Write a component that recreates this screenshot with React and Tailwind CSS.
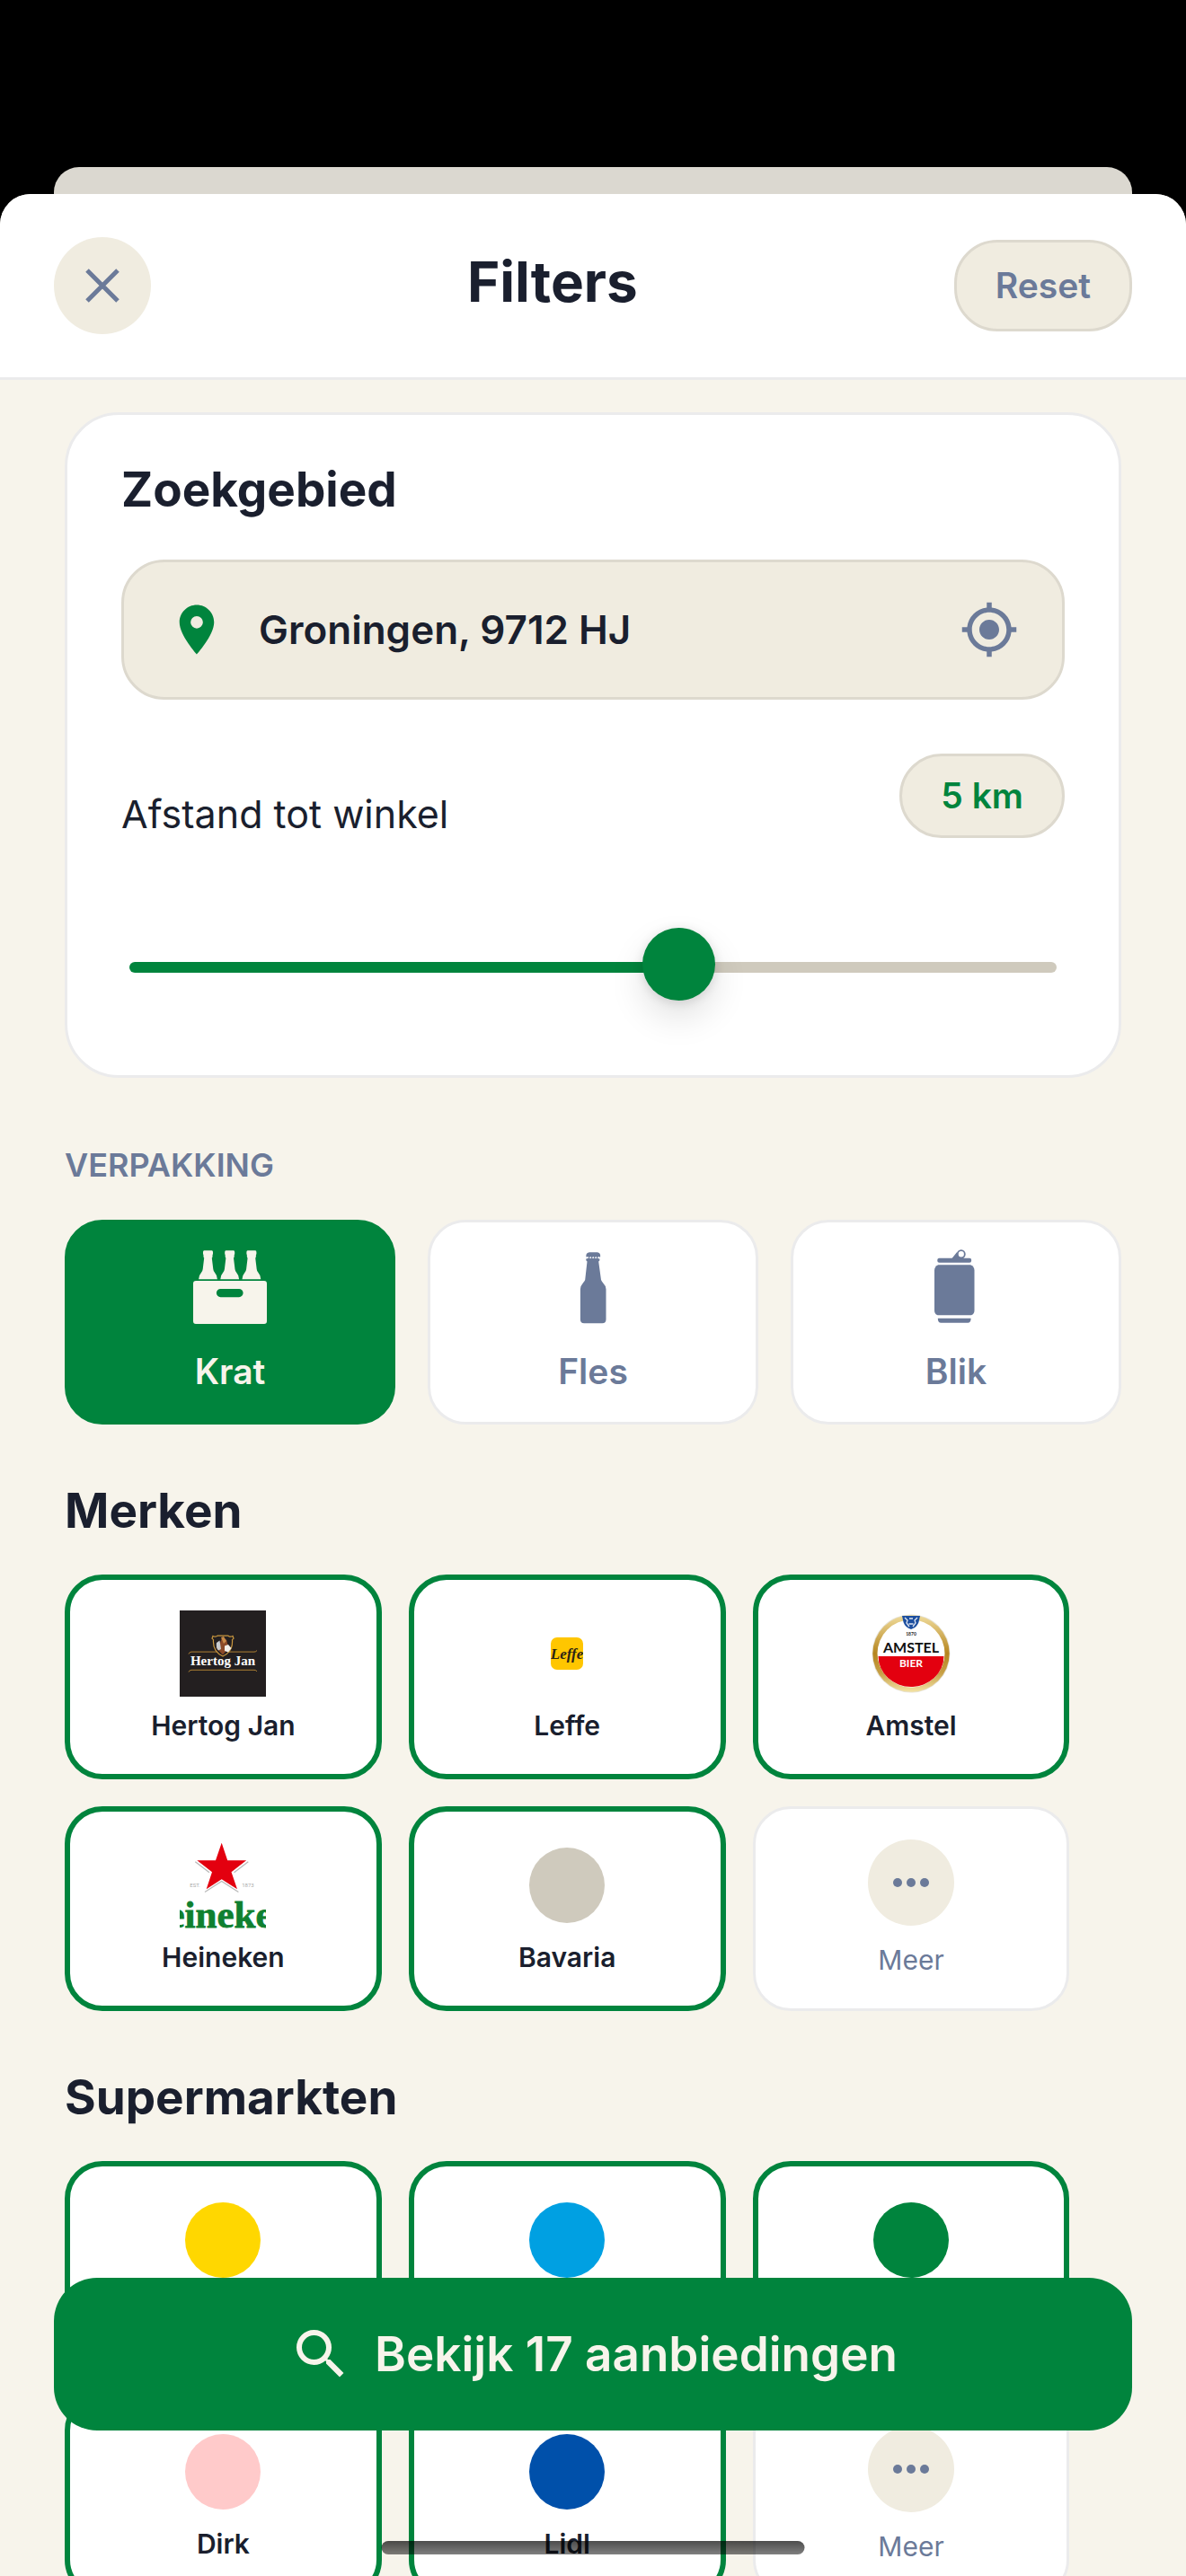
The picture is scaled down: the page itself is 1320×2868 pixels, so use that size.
import React, { useState } from 'react';
import clsx from 'clsx';
import { MdMyLocation, MdPlace, MdSearch } from 'react-icons/md';

const DISTANCES = [1, 2, 3, 5, 10, 25];

const CrateIcon = () => (
    <svg viewBox="0 0 84 84" className="size-[84px]" fill="currentColor" aria-hidden="true">
        {[17.5, 41.7, 65.9].map((x) => (
            <path
                key={x}
                transform={`translate(${x} 0)`}
                d="M-4.3 1.3h8.6q1.2.3 1.2 1.6v2.3l-.6 1 .4 1-.6.8.3 1-.7.6L5.8 22q.3 2 1.5 3.6 3.1 3.6 3.1 7.7h-20.8q0-4.1 3.1-7.7Q-6.1 24-5.8 22L-4.3 9.600l-.7-.6.3-1-.6-.8.4-1-.6-1V2.900q0-1.300 1.200-1.600z"
            />
        ))}
        <path
            fillRule="evenodd"
            d="M4 35h76q3 0 3 3v42q0 3-3 3H4q-3 0-3-3V38q0-3 3-3zM31.5 44a4.600 4.600 0 0 0 0 9.200h20.500a4.600 4.600 0 0 0 0-9.200z"
        />
    </svg>
);

const BottleIcon = () => (
    <svg viewBox="0 0 84 84" className="size-[84px]" fill="currentColor" aria-hidden="true">
        <path d="M37.500 3.300h9.400q3.300.6 3.300 4.200l-.4 1.300-1.600-.8-1.500 1.600-1.500-1.600-1.500 1.600-1.500-1.600-1.500 1.600-1.500-1.600-1.500 1.600-1.500-1.600-1.400.8-.5-1.300q0-3.600 3.700-4.200z" />
        <path d="M36.100 10l1.500-1 1.500 1.300 1.500-1.300 1.500 1.300 1.500-1.300 1.500 1.300 1.500-1.300 1.500 1.200 1.300.2v1.800l-1.200 1.400L51 34q.4 1.200 1.900 2.900 3.600 3.700 3.600 7.400V78q0 4.200-4.200 4.200H32.100q-4.200 0-4.200-4.200V44.300q0-3.700 3.300-7.400 1.700-1.700 2-2.900l2.300-20.400-1.200-1.400v-1.800z" />
    </svg>
);

const CanIcon = () => (
    <svg viewBox="0 0 84 84" className="size-[84px]" fill="currentColor" aria-hidden="true">
        <ellipse cx="47.8" cy="5.3" rx="4" ry="4.2" fill="none" stroke="currentColor" strokeWidth="1.8" />
        <path d="M37.500 9.900l6-7.400q-.8 4.700 3.300 7.400z" />
        <rect x="21.3" y="9.700" width="37.800" height="5" rx="2" />
        <path d="M22.200 17.300h36q4.300 1.700 4.300 6.200v44.600q0 4-3.500 5.200H21.500q-3.500-1.200-3.500-5.200V23.500q0-4.500 4.200-6.200z" />
        <path d="M21.800 76.700h36.800q0 5-3.500 5H25.300q-3.500 0-3.500-5z" />
    </svg>
);

const HertogJanLogo = () => (
    <svg viewBox="0 0 96 96" className="size-24" aria-hidden="true">
        <rect width="96" height="96" fill="#231f20" />
        <g fill="none" stroke="#c08c35" strokeWidth="0.9">
            <path d="M10 48.500q1-2.400 3-2.400h70q2 0 3-1.600" />
            <path d="M10 68.500q1-2.200 3-2.200h70q2 0 3 1.600" />
        </g>
        <path
            d="M37 28.500q2.500 1.500 5-.3h12q2.500 1.800 5 .3l1 2.700-1.500 1.500q1 13-10.500 18.300Q36.500 45.700 37.500 32.700L36 31.200z"
            fill="#231f20"
            stroke="#c9973f"
            strokeWidth="1.2"
        />
        <path d="M47 30.500l5 2 2.500 9-6.500 8-7.500-8 4-4z" fill="#8b4a28" />
        <path d="M41 36l3.500-2.500L46 43l-3 1.500q-3-3.500-2-8.500z" fill="#c9ccd0" />
        <path d="M50 39.500l4-1.500 3.500 4-3.500 4.500-4-1.500z" fill="#f2efe9" />
        <path d="M46 30l3-1 3 5-3 3z" fill="#c98b48" />
        <text x="48" y="61" textAnchor="middle" fill="#fff" fontSize="15" fontWeight="700" fontFamily="Liberation Serif, serif">
            Hertog Jan
        </text>
    </svg>
);

const LeffeLogo = () => (
    <svg viewBox="0 0 36 36" className="size-9" aria-hidden="true">
        <rect width="36" height="36" rx="7" fill="#ffc600" />
        <text x="18" y="24" textAnchor="middle" fill="#2b2416" fontSize="17" fontWeight="700" fontStyle="italic" fontFamily="Liberation Serif, serif">
            Leffe
        </text>
    </svg>
);

const AmstelLogo = () => (
    <svg viewBox="0 0 96 96" className="size-24" aria-hidden="true">
        <defs>
            <linearGradient id="amstel-gold" x1="0" y1="0" x2="0" y2="1">
                <stop offset="0" stopColor="#f0dc9c" />
                <stop offset="0.5" stopColor="#b5851f" />
                <stop offset="0.75" stopColor="#c79f45" />
                <stop offset="1" stopColor="#f3e2a4" />
            </linearGradient>
        </defs>
        <circle cx="48" cy="48" r="43.5" fill="#e6e2d6" />
        <circle cx="48" cy="48" r="42.7" fill="url(#amstel-gold)" />
        <circle cx="48" cy="48" r="37.5" fill="#fff" />
        <path d="M11.500 51h73a36.500 34 0 0 1-73 0z" fill="#e3000f" />
        <path d="M38 6h20l-1.500 7q-2 6-8.500 8-6.500-2-8.500-8z" fill="#1d4f9f" />
        <path d="M41 8l3 3-1 3 3 4M55 8l-3 3 1 3-3 4M46 9h4M45.500 15h5" fill="none" stroke="#dfe6f2" strokeWidth="1.3" />
        <text x="48" y="28" textAnchor="middle" fill="#222" fontSize="5" fontWeight="700" fontFamily="Lato, sans-serif">1870</text>
        <text x="48" y="47" textAnchor="middle" fill="#111" fontSize="16" fontWeight="700" fontFamily="Lato, sans-serif">AMSTEL</text>
        <text x="48" y="63" textAnchor="middle" fill="#fff" fontSize="12" fontWeight="700" fontFamily="Lato, sans-serif">BIER</text>
    </svg>
);

const HeinekenLogo = () => (
    <svg viewBox="0 0 96 96" className="size-24 overflow-hidden" aria-hidden="true">
        <path d="M17.300 21.800l15.700 12M76.300 21.800l-15.700 12M28 55.500l18.700-12 18.700 12" fill="none" stroke="#b9b9b9" strokeWidth="1.3" />
        <path d="M46.700.7l6.500 19.600h21L57.500 33.300l6.500 19-17.300-11-17 11 6.300-19-16.700-13H40z" fill="#e3000f" />
        <text x="17" y="50" textAnchor="middle" fill="#aaa" fontSize="6" fontFamily="Roboto, sans-serif">EST.</text>
        <text x="76" y="50" textAnchor="middle" fill="#aaa" fontSize="6" fontFamily="Roboto, sans-serif">1873</text>
        <text x="-47" y="95" fill="#0f8030" stroke="#0f8030" strokeWidth="0.8" fontSize="43" fontWeight="700" fontFamily="Liberation Serif, serif">
            Heineken
        </text>
    </svg>
);

const Dot = ({ className }) => <span className={clsx('size-[84px] rounded-full', className)} />;

const packagings = [
    { name: 'Krat', icon: <CrateIcon /> },
    { name: 'Fles', icon: <BottleIcon /> },
    { name: 'Blik', icon: <CanIcon /> }
];

const brands = [
    { name: 'Hertog Jan', logo: <HertogJanLogo /> },
    { name: 'Leffe', logo: <LeffeLogo /> },
    { name: 'Amstel', logo: <AmstelLogo /> },
    { name: 'Heineken', logo: <HeinekenLogo /> },
    { name: 'Bavaria', logo: <Dot className="bg-[#cfcabd]" /> }
];

const stores = [
    { name: 'Jumbo', logo: <Dot className="bg-[#ffd700]" /> },
    { name: 'Albert Heijn', logo: <Dot className="bg-[#00a0e2]" /> },
    { name: 'Plus', logo: <Dot className="bg-[#00843d]" /> },
    { name: 'Dirk', logo: <Dot className="bg-[#ffcaca]" /> },
    { name: 'Lidl', logo: <Dot className="bg-[#0050aa]" /> }
];

// Wrapping grid of selectable tiles, closed off by a "Meer" tile
const TileSection = ({ title, items }) => {
    const [selected, setSelected] = useState(items.map((item) => item.name));

    const toggle = (name) => {
        setSelected((prev) => (prev.includes(name) ? prev.filter((n) => n !== name) : [...prev, name]));
    };

    return (
        <section className="mt-[61px]">
            <h2 className="text-[53px] leading-[70px] font-bold">{title}</h2>
            <div className="mt-9 flex flex-wrap gap-[30px]">
                {items.map(({ name, logo }) => (
                    <button
                        key={name}
                        type="button"
                        aria-pressed={selected.includes(name)}
                        onClick={() => toggle(name)}
                        className={clsx(
                            'flex w-[30%] flex-col items-center gap-[14px] rounded-[42px] border-[6px] bg-white pt-[34px] pb-9',
                            selected.includes(name) ? 'border-[#00843d]' : 'border-[#ebebec]'
                        )}
                    >
                        <span className="flex size-24 items-center justify-center">{logo}</span>
                        <span className="text-[30px] leading-9 font-semibold">{name}</span>
                    </button>
                ))}
                <button
                    type="button"
                    className="flex w-[30%] flex-col items-center gap-5 rounded-[42px] border-[3px] border-[#ebebec] bg-white pt-[34px] pb-9 text-[#6b7a99]"
                >
                    <span className="flex size-24 items-center justify-center gap-[5px] rounded-full bg-[#f0ece0]">
                        <span className="size-[10px] rounded-full bg-current" />
                        <span className="size-[10px] rounded-full bg-current" />
                        <span className="size-[10px] rounded-full bg-current" />
                    </span>
                    <span className="text-[30px] leading-9">Meer</span>
                </button>
            </div>
        </section>
    );
};

const SearchArea = () => {
    const [step, setStep] = useState(3);
    const fill = `${(step / (DISTANCES.length - 1)) * 100}%`;

    return (
        <section className="rounded-[60px] border-[3px] border-[#ebebec] bg-white px-[60px] pt-12 pb-[75px]">
            <h2 className="text-[53px] leading-[70px] font-bold">Zoekgebied</h2>

            <div className="mt-[43px] flex items-center rounded-[48px] border-[3px] border-[#ddd9ce] bg-[#f0ece0] px-12 py-[42px]">
                <MdPlace className="size-[66px] shrink-0 text-[#00843d]" />
                <input
                    type="text"
                    aria-label="Locatie"
                    defaultValue="Groningen, 9712 HJ"
                    className="mx-9 h-[66px] min-w-0 flex-1 bg-transparent text-[44px] font-semibold outline-none"
                />
                <button type="button" aria-label="Gebruik mijn locatie" className="text-[#6b7a99]">
                    <MdMyLocation className="size-[66px]" />
                </button>
            </div>

            <div className="mt-[60px] flex items-end justify-between">
                <label htmlFor="distance" className="text-[43px] leading-[54px]">
                    Afstand tot winkel
                </label>
                <output
                    htmlFor="distance"
                    className="rounded-full border-[3px] border-[#ddd9ce] bg-[#f0ece0] px-[43px] py-[17px] text-[39px] leading-[54px] font-semibold text-[#00843d]"
                >
                    {DISTANCES[step]} km
                </output>
            </div>

            <div className="mt-[99px] px-[9px]">
                <input
                    id="distance"
                    type="range"
                    min="0"
                    max={DISTANCES.length - 1}
                    value={step}
                    onChange={(e) => setStep(Number(e.target.value))}
                    style={{ '--fill': fill }}
                    className="block h-[90px] w-full cursor-pointer appearance-none bg-transparent [&::-webkit-slider-runnable-track]:h-3 [&::-webkit-slider-runnable-track]:rounded-full [&::-webkit-slider-runnable-track]:bg-[linear-gradient(to_right,#00843d_var(--fill),#cfcabd_var(--fill))] [&::-webkit-slider-thumb]:mt-[-38px] [&::-webkit-slider-thumb]:size-[81px] [&::-webkit-slider-thumb]:appearance-none [&::-webkit-slider-thumb]:rounded-full [&::-webkit-slider-thumb]:bg-[#00843d] [&::-webkit-slider-thumb]:shadow-[0_18px_39px_rgba(0,0,0,0.12),0_2px_12px_rgba(0,0,0,0.12)]"
                />
            </div>
        </section>
    );
};

const Packaging = () => {
    const [active, setActive] = useState('Krat');

    return (
        <section className="mt-[75px]">
            <h3 className="text-[36px] leading-[45px] font-semibold text-[#6b7a99] uppercase">Verpakking</h3>
            <div className="mt-[38px] grid grid-cols-3 gap-9">
                {packagings.map(({ name, icon }) => (
                    <button
                        key={name}
                        type="button"
                        aria-pressed={active === name}
                        onClick={() => setActive(name)}
                        className={clsx(
                            'flex flex-col items-center gap-7 rounded-[42px] border-[3px] pt-[30px] pb-8',
                            active === name
                                ? 'border-[#00843d] bg-[#00843d] text-[#f7f4eb]'
                                : 'border-[#ebebec] bg-white text-[#6b7a99]'
                        )}
                    >
                        {icon}
                        <span className="text-[39px] leading-12 font-semibold">{name}</span>
                    </button>
                ))}
            </div>
        </section>
    );
};

const App = () => (
    <div className="relative flex h-screen flex-col overflow-hidden bg-black pt-[186px] font-['Inter',sans-serif] text-[#1a1f2e]">
        {/* Edge of the screen underneath the sheet */}
        <div className="mx-[60px] h-[30px] shrink-0 rounded-t-[28px] bg-[#dbd8d0]" />

        <main className="flex min-h-0 flex-1 flex-col overflow-hidden rounded-t-[34px] bg-[#f7f4eb]">
            <header className="flex shrink-0 items-center justify-between border-b-[3px] border-[#ebebec] bg-white px-[60px] py-12">
                <button
                    type="button"
                    aria-label="Sluiten"
                    className="flex size-[108px] items-center justify-center rounded-full bg-[#f0ece0] text-[#6b7a99]"
                >
                    <svg viewBox="0 0 38 38" className="size-[38px]" fill="none" stroke="currentColor" strokeWidth="5" aria-hidden="true">
                        <path d="M2 2l34 34M36 2L2 36" />
                    </svg>
                </button>
                <h1 className="pb-2 text-[62px] leading-[72px] font-bold">Filters</h1>
                <button
                    type="button"
                    className="rounded-[48px] border-[3px] border-[#ddd9ce] bg-[#f0ece0] px-[43px] py-6 text-[39px] leading-12 font-semibold text-[#6b7a99]"
                >
                    Reset
                </button>
            </header>

            <div className="min-h-0 flex-1 overflow-y-auto px-[72px] pt-9 [scrollbar-width:none]">
                <SearchArea />
                <Packaging />
                <TileSection title="Merken" items={brands} />
                <TileSection title="Supermarkten" items={stores} />
            </div>
        </main>

        <button
            type="button"
            className="absolute inset-x-[60px] bottom-[162px] flex items-center justify-center gap-6 rounded-[48px] bg-[#00843d] py-[49px] text-[53px] leading-[72px] font-semibold text-[#f7f4eb]"
        >
            <MdSearch className="size-[72px]" />
            Bekijk 17 aanbiedingen
        </button>

        {/* Home indicator */}
        <div className="absolute bottom-6 left-1/2 h-[15px] w-[471px] -translate-x-1/2 rounded-full bg-linear-to-b from-black/70 to-black/50" />
    </div>
);

export default App;
